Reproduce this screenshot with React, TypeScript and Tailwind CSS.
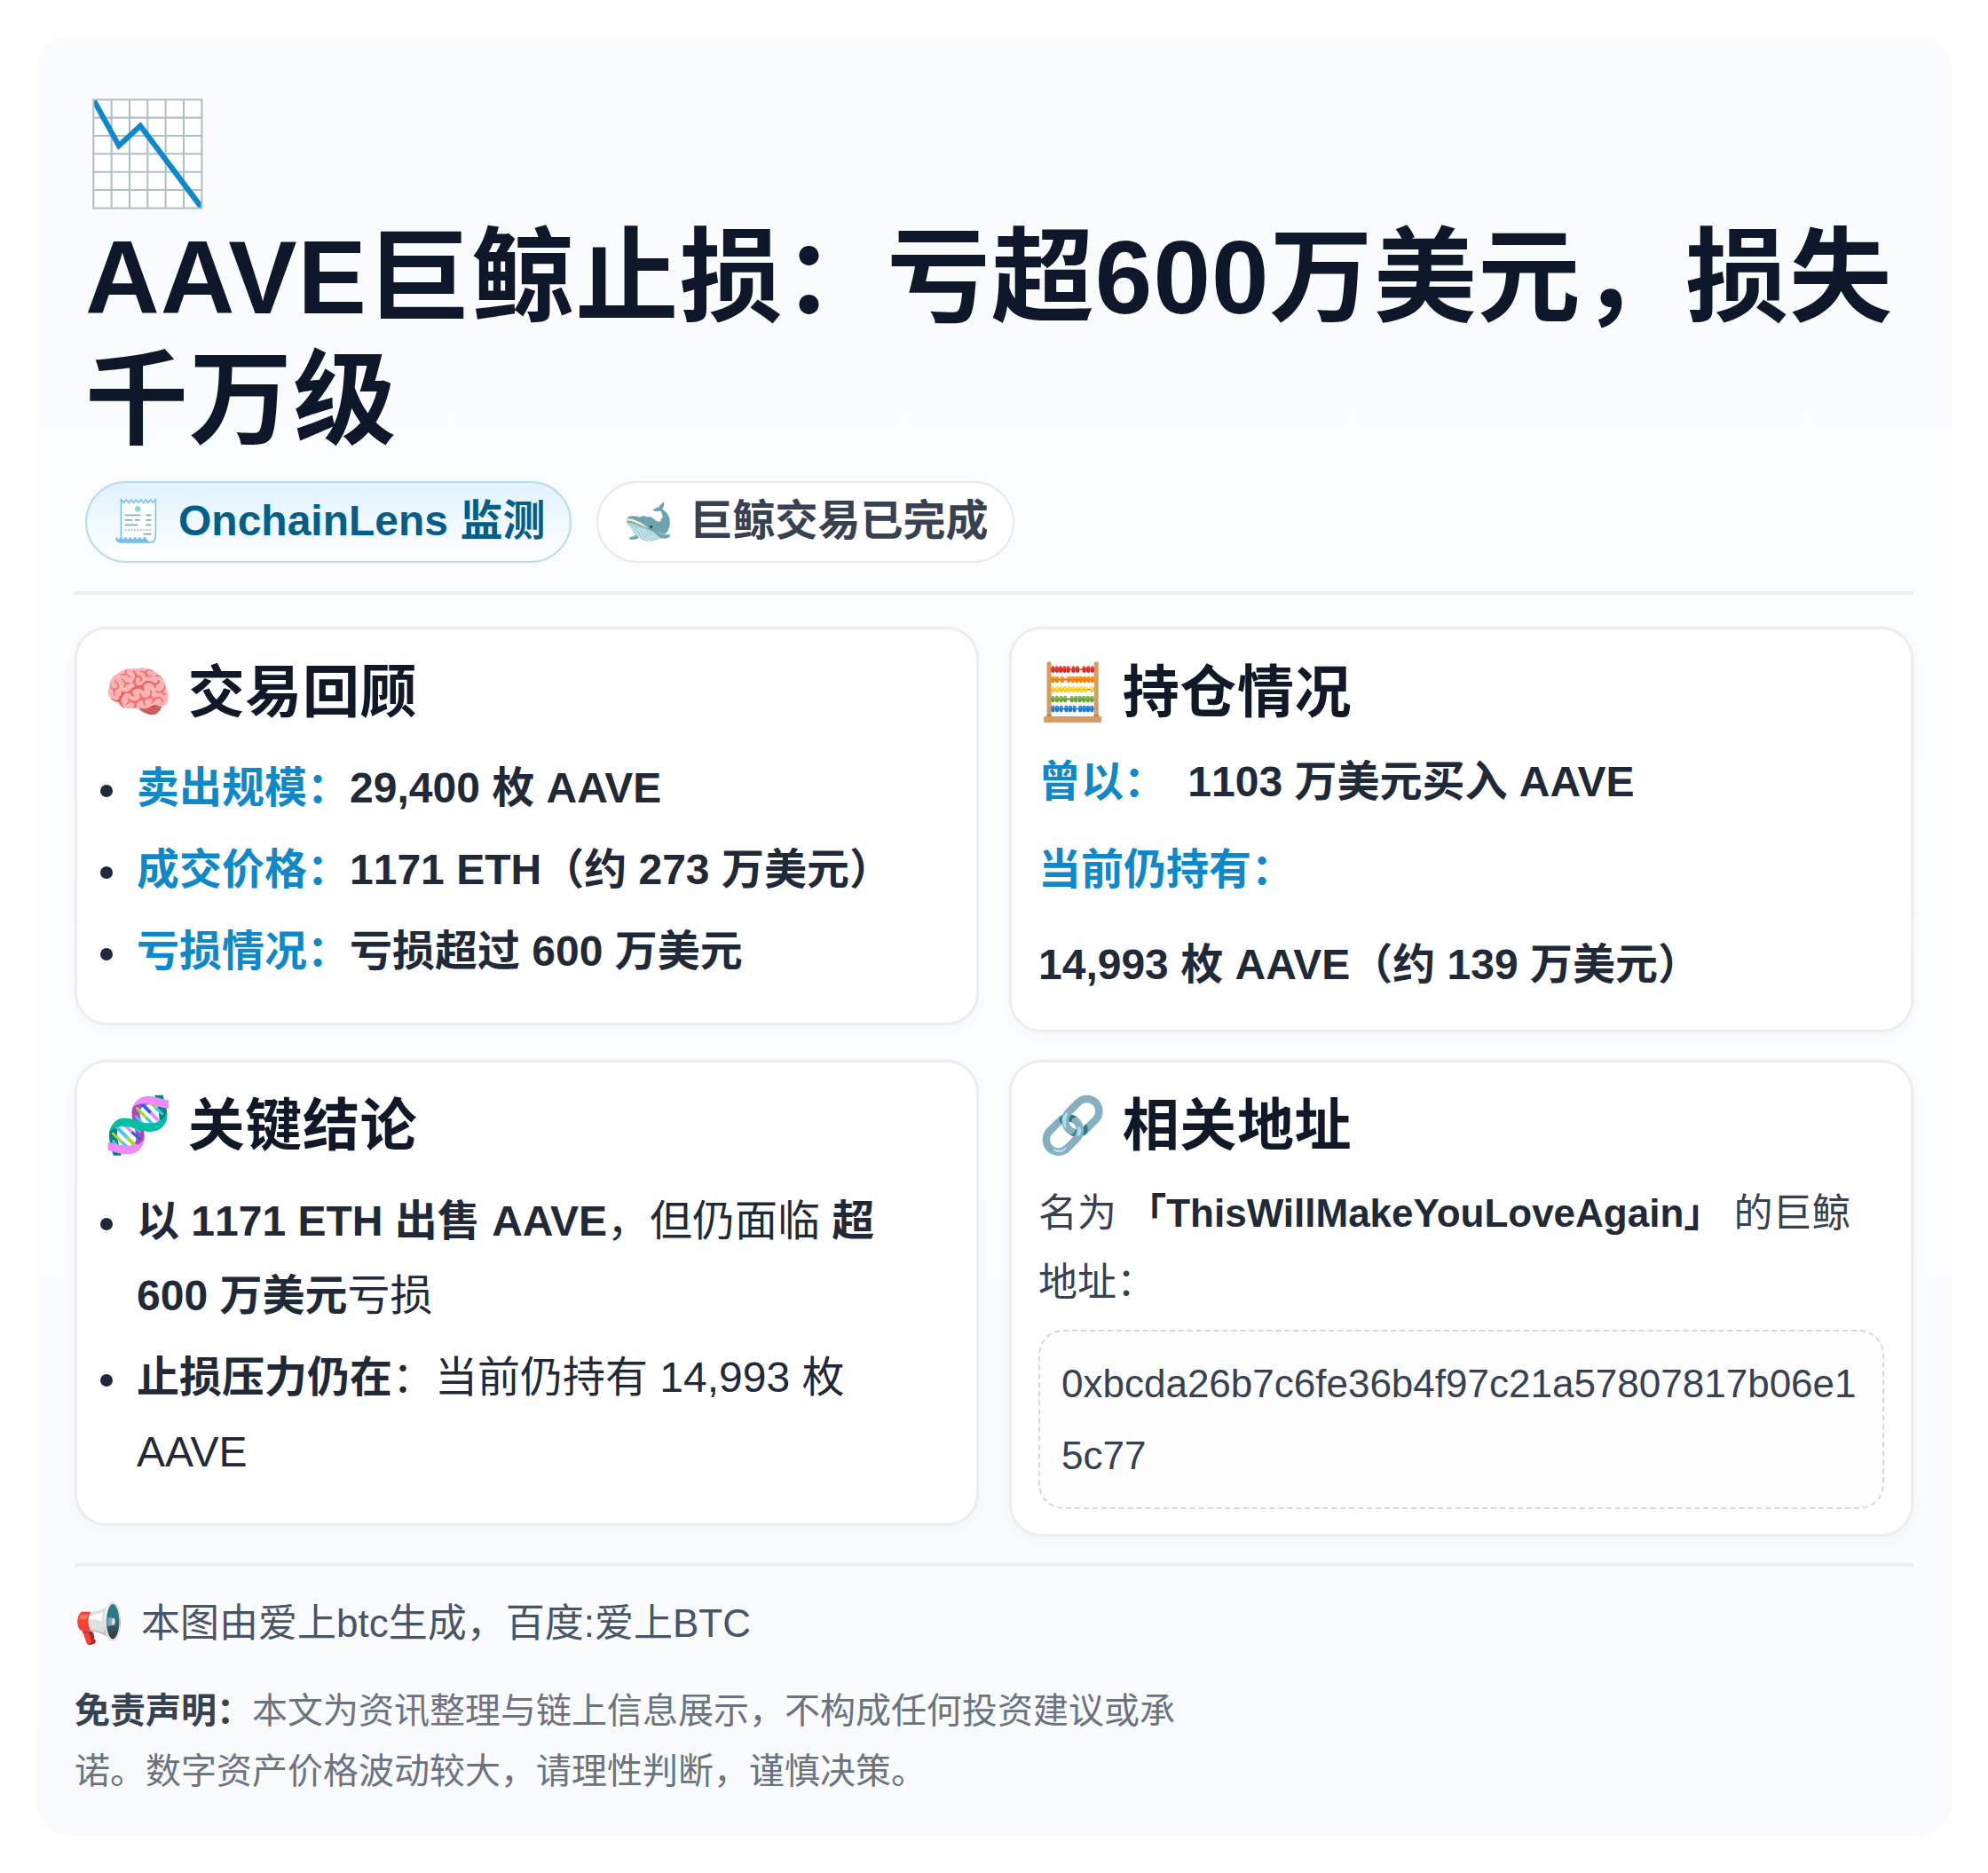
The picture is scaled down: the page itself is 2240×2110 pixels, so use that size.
import React from "react";

function Title({ icon, children }: { icon: string; children: React.ReactNode }) {
  return (
    <h2 className="flex items-center text-[64px] leading-[88px] tracking-[0.01em] font-bold text-[#111827]">
      <span className="text-[62px] mr-[17px]">{icon}</span>
      {children}
    </h2>
  );
}

function Li({ children }: { children: React.ReactNode }) {
  return (
    <li className="mb-[8px] leading-[84px]">
      <span className="inline-block w-[14px] h-[14px] rounded-full bg-[#1f2937] ml-[-41px] mr-[27px] align-middle" />
      {children}
    </li>
  );
}

const B = ({ children }: { children: React.ReactNode }) => <strong className="font-bold text-[#0f88c9]">{children}</strong>;
const D = ({ children }: { children: React.ReactNode }) => <strong className="font-bold text-[#1f2937]">{children}</strong>;
const N = ({ children }: { children: React.ReactNode }) => <span className="[font-kerning:none]">{children}</span>;

const card = "rounded-[36px] border-[3px] border-[#ebedf0] bg-white px-[30px] pt-[27px] pb-[28px] shadow-[0_4px_16px_rgba(15,23,42,0.03)]";

export default function App() {
  return (
    <div className="bg-white p-[40px] w-[2240px] h-[2110px] font-['Liberation_Sans','Noto_Sans_CJK_SC',sans-serif]">
      <div className="w-[2160px] h-[2028px] rounded-[40px] bg-gradient-to-b from-[#fafbfd] via-[#fcfdfe] to-[#f8fafc] px-[44px] pt-[62px]">
        <header className="pl-[12px]">
          <h1 className="text-[116px] leading-[138px] tracking-[1.1px] font-bold text-[#0f172a]">
            <span className="block text-[113px] leading-[142px]">📉</span>
            AAVE巨鲸止损：亏超600万美元，损失千万级
          </h1>
          <div className="flex gap-[28px] mt-[22px]">
            <div className="flex items-center h-[92px] pb-[2px] rounded-full border-[2px] border-[#b6dcf5] bg-gradient-to-b from-[#e0f2fe] to-white px-[28px] text-[48px] font-bold text-[#045e8a]">
              <span className="text-[46px] mr-[18px]">🧾</span>OnchainLens 监测
            </div>
            <div className="flex items-center h-[92px] pb-[2px] rounded-full border-[2px] border-[#e8e9eb] bg-white px-[28px] text-[48px] font-bold text-[#374151]">
              <span className="text-[46px] mr-[18px]">🐋</span>巨鲸交易已完成
            </div>
          </div>
        </header>
        <div className="h-[4px] bg-[#eceef0] mt-[32px]" />
        <div className="grid grid-cols-2 gap-x-[34px] gap-y-[31px] items-start mt-[36px]">
          <section className={card}>
            <Title icon="🧠">交易回顾</Title>
            <ul className="list-none mt-[22px] pb-[2px] pl-[37px] text-[48px] text-[#1f2937]">
              <Li><B>卖出规模：</B><D>29,400 枚 AAVE</D></Li>
              <Li><B>成交价格：</B><D><N>1171</N> ETH（约 273 万美元）</D></Li>
              <Li><B>亏损情况：</B><D>亏损超过 600 万美元</D></Li>
            </ul>
          </section>
          <section className={card}>
            <Title icon="🧮">持仓情况</Title>
            <div className="mt-[15px] mb-[3px] text-[48px] leading-[84px]">
              <p><B>曾以：</B> <span className="ml-[11px]"><D><N>1103</N> 万美元买入 AAVE</D></span></p>
              <p className="mt-[15px]"><B>当前仍持有：</B></p>
              <p className="mt-[23px]"><D>14,993 枚 AAVE（约 139 万美元）</D></p>
            </div>
          </section>
          <section className={card}>
            <Title icon="🧬">关键结论</Title>
            <ul className="list-none mt-[22px] pb-[2px] pl-[37px] text-[48px] text-[#1f2937]">
              <Li><D>以 <N>1171</N> ETH 出售 AAVE</D>，但仍面临 <D>超 600 万美元</D>亏损</Li>
              <Li><D>止损压力仍在</D>：当前仍持有 14,993 枚 AAVE</Li>
            </ul>
          </section>
          <section className={card}>
            <Title icon="🔗">相关地址</Title>
            <p className="mt-[16px] text-[44px] leading-[78px] text-[#374151]">名为 <D>「ThisWillMakeYouLoveAgain」</D> 的巨鲸地址：</p>
            <div className="mt-[14px] rounded-[28px] border-[2px] border-dashed border-[#d5d8dd] bg-[#fdfdfe] px-[24px] py-[18px] text-[44px] leading-[81px] text-[#374151] break-all">
              0xbcda26b7c6fe36b4f97c21a57807817b06e15c77
            </div>
          </section>
        </div>
        <div className="h-[4px] bg-[#eceef0] mt-[30px]" />
        <p className="mt-[25px] text-[44px] leading-[77px] text-[#475569]"><span className="mr-[20px]">📢</span>本图由爱上btc生成，百度:爱上BTC</p>
        <p className="mt-[26px] max-w-[1260px] text-[40px] leading-[68px] text-[#6b7280]"><strong className="font-bold text-[#374151]">免责声明：</strong>本文为资讯整理与链上信息展示，不构成任何投资建议或承诺。数字资产价格波动较大，请理性判断，谨慎决策。</p>
      </div>
    </div>
  );
}
